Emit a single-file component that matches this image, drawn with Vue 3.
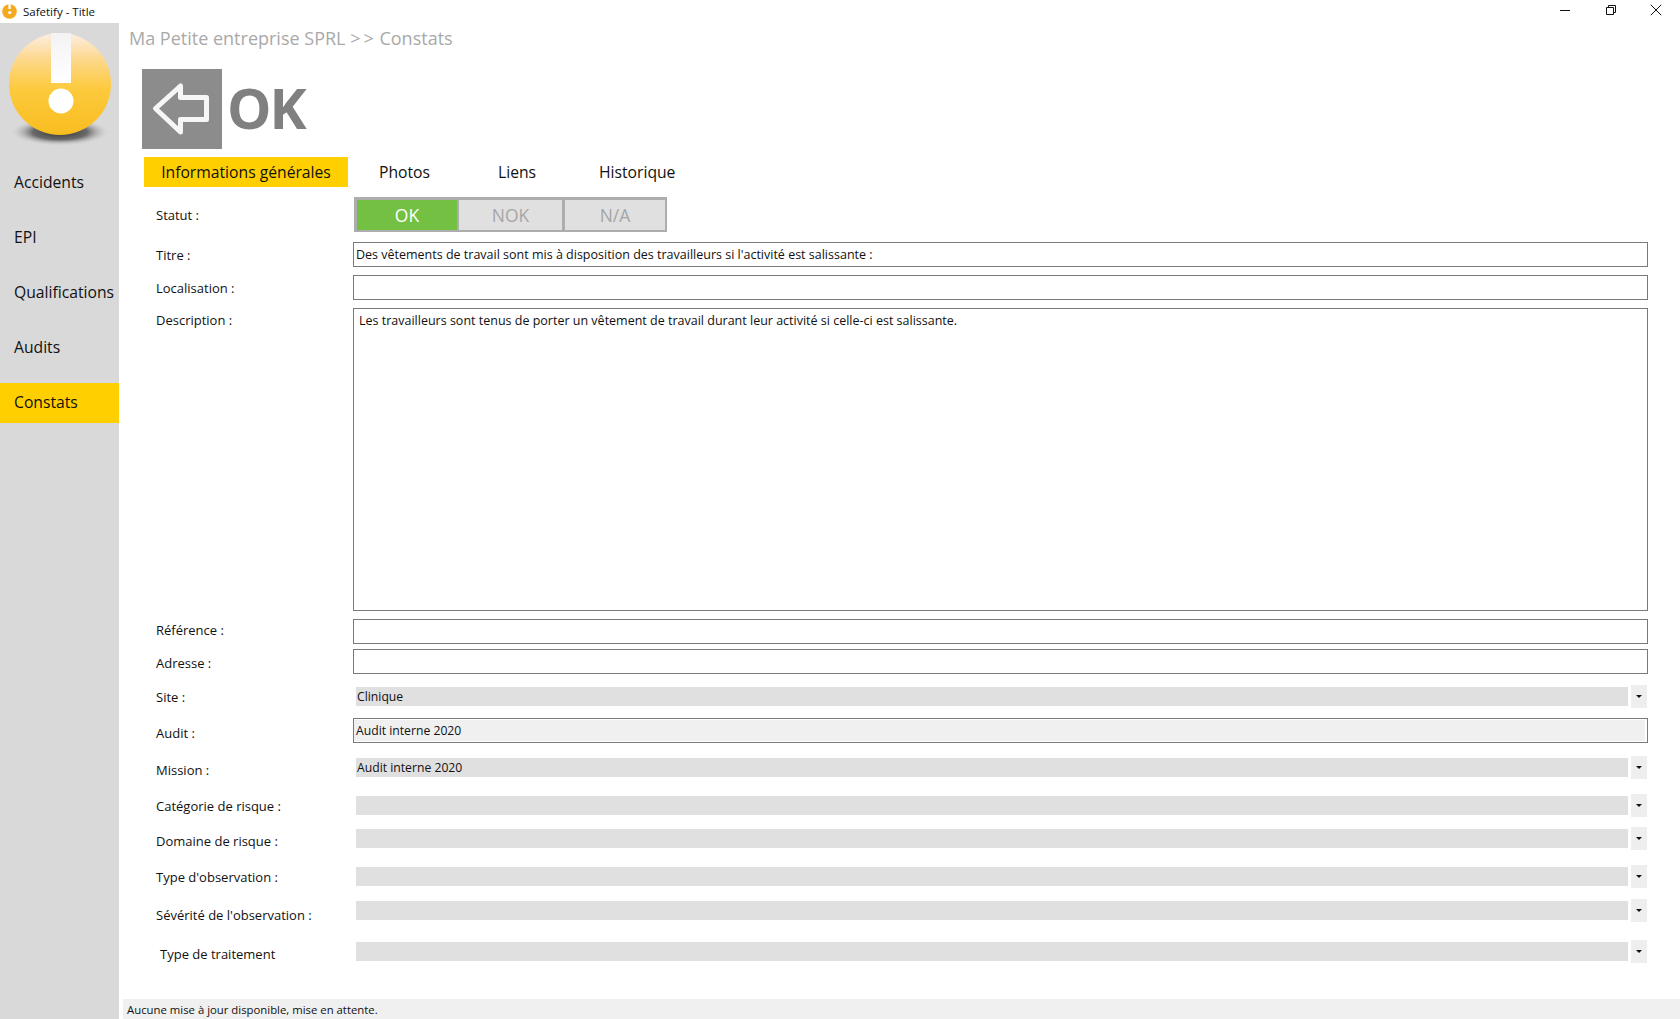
<script setup>
const nav = ['Accidents', 'EPI', 'Qualifications', 'Audits', 'Constats']
const tabs = [
  { label: 'Informations générales', cls: 'tab-info' },
  { label: 'Photos', cls: 'tab-photos' },
  { label: 'Liens', cls: 'tab-liens' },
  { label: 'Historique', cls: 'tab-hist' }
]
const rows = [
  { label: 'Titre :', kind: 'input', value: "Des vêtements de travail sont mis à disposition des travailleurs si l'activité est salissante :", gap: 10, lab: 4 },
  { label: 'Localisation :', kind: 'input', value: '', gap: 8, lab: 4 },
  { label: 'Description :', kind: 'area', value: 'Les travailleurs sont tenus de porter un vêtement de travail durant leur activité si celle-ci est salissante.', gap: 8, lab: 3 },
  { label: 'Référence :', kind: 'input', value: '', gap: 8, lab: 2 },
  { label: 'Adresse :', kind: 'input', value: '', gap: 5, lab: 5 },
  { label: 'Site :', kind: 'combo', value: 'Clinique', gap: 11, lab: 3 },
  { label: 'Audit :', kind: 'readonly', value: 'Audit interne 2020', gap: 10, lab: 6 },
  { label: 'Mission :', kind: 'combo', value: 'Audit interne 2020', gap: 13, lab: 5 },
  { label: 'Catégorie de risque :', kind: 'combo', value: '', gap: 15, lab: 3 },
  { label: 'Domaine de risque :', kind: 'combo', value: '', gap: 10, lab: 5 },
  { label: "Type d'observation :", kind: 'combo', value: '', gap: 15, lab: 3 },
  { label: "Sévérité de l'observation :", kind: 'combo', value: '', gap: 11, lab: 7 },
  { label: 'Type de traitement', kind: 'combo', value: '', gap: 18, lab: 5, indent: true }
]
</script>

<template>
  <div class="window">
    <header class="titlebar">
      <div class="title-left">
        <svg class="app-icon" width="18" height="18" viewBox="0 0 18 18">
          <circle cx="8.5" cy="8.5" r="7.3" fill="#f3aa1f" />
          <rect x="7.3" y="0" width="2.6" height="6" fill="#fff" fill-opacity="0.85" />
          <circle cx="8.8" cy="9.5" r="1.6" fill="#fff" />
        </svg>
        <span>Safetify - Title</span>
      </div>
      <div class="controls">
        <svg width="12" height="12" viewBox="0 0 12 12"><path d="M1 6.5h10" stroke="#111" fill="none" /></svg>
        <svg width="12" height="12" viewBox="0 0 12 12"><path d="M1.5 3.5h7v7h-7zM3.5 3.5v-2h7v7h-2" stroke="#111" fill="none" /></svg>
        <svg width="12" height="12" viewBox="0 0 12 12"><path d="M.8.8l10.4 10.4M11.2.8L.8 11.2" stroke="#111" fill="none" /></svg>
      </div>
    </header>

    <div class="body">
      <aside class="sidebar">
        <svg class="logo" width="119" height="125" viewBox="0 0 119 125">
          <defs>
            <linearGradient id="ball" x1="0" y1="0" x2="0" y2="1">
              <stop offset="0" stop-color="#fdeee4" />
              <stop offset="0.25" stop-color="#fdd88e" />
              <stop offset="0.55" stop-color="#fdca3c" />
              <stop offset="1" stop-color="#f8bd20" />
            </linearGradient>
            <radialGradient id="shadow">
              <stop offset="0" stop-color="#333" />
              <stop offset="0.55" stop-color="#6a6a6a" />
              <stop offset="1" stop-color="#d9d9d9" stop-opacity="0" />
            </radialGradient>
            <linearGradient id="bar" x1="0" y1="0" x2="0" y2="1">
              <stop offset="0" stop-color="#f3f3f3" />
              <stop offset="1" stop-color="#fff" />
            </linearGradient>
          </defs>
          <ellipse cx="60" cy="109" rx="50" ry="14" fill="url(#shadow)" />
          <circle cx="60" cy="61" r="51" fill="url(#ball)" />
          <rect x="51" y="10" width="20" height="50" fill="url(#bar)" />
          <circle cx="61" cy="78" r="12.5" fill="#fff" />
        </svg>
        <nav class="nav">
          <div v-for="item in nav" :key="item" class="nav-item" :class="{ active: item === 'Constats' }">{{ item }}</div>
        </nav>
      </aside>

      <main class="main">
        <h1 class="crumb">Ma Petite entreprise SPRL <span class="sep">&gt;&gt;</span> Constats</h1>

        <div class="status-head">
          <div class="back">
            <svg width="80" height="80" viewBox="0 0 80 80">
              <path d="M13.5 39.5 L38.5 17 L38.5 28.5 L64.5 28.5 L64.5 50.5 L38.5 50.5 L38.5 63 Z" fill="none" stroke="#f6f6f6" stroke-width="5" stroke-linejoin="round" />
            </svg>
          </div>
          <span class="big-ok">OK</span>
        </div>

        <div class="tabs">
          <div v-for="(t, i) in tabs" :key="t.label" class="tab" :class="[t.cls, { active: i === 0 }]">{{ t.label }}</div>
        </div>

        <div class="form">
          <div class="row row-status">
            <label class="label">Statut :</label>
            <div class="segments">
              <div class="seg seg-on">OK</div>
              <div class="seg seg-mid">NOK</div>
              <div class="seg seg-last">N/A</div>
            </div>
          </div>

          <div v-for="r in rows" :key="r.label" class="row" :class="'row-' + r.kind" :style="{ marginTop: r.gap + 'px' }">
            <label class="label" :class="{ indent: r.indent }" :style="{ marginTop: r.lab + 'px' }">{{ r.label }}</label>
            <div v-if="r.kind === 'combo'" class="combo">
              <div class="combo-value">{{ r.value }}</div>
              <div class="combo-btn"><span class="caret"></span></div>
            </div>
            <div v-else class="field" :class="'field-' + r.kind">{{ r.value }}</div>
          </div>
        </div>

        <footer class="statusbar">Aucune mise à jour disponible, mise en attente.</footer>
      </main>
    </div>
  </div>
</template>

<style>
html, body { margin: 0; padding: 0; background: #fff; }
</style>

<style scoped>
.window {
  width: 1680px;
  height: 1019px;
  display: flex;
  flex-direction: column;
  overflow: hidden;
  background: #fff;
  color: #111;
  font-family: "Open Sans", "Noto Sans", sans-serif;
}
.titlebar {
  height: 23px;
  flex: none;
  display: flex;
  justify-content: space-between;
}
.title-left {
  display: flex;
  align-items: center;
  gap: 4px;
  padding-left: 1px;
  font-size: 11.5px;
}
.controls {
  display: flex;
  gap: 33.5px;
  padding: 4px 18px 0 0;
}
.body { flex: 1; display: flex; min-height: 0; }
.sidebar {
  width: 119px;
  flex: none;
  background: #d9d9d9;
}
.logo { display: block; }
.nav { margin-top: 15px; }
.nav-item {
  height: 40px;
  margin-bottom: 15px;
  line-height: 38px;
  padding-left: 14px;
  font-size: 15.7px;
  white-space: nowrap;
}
.nav-item.active { background: #ffcf00; }
.main {
  flex: 1;
  min-width: 0;
  display: flex;
  flex-direction: column;
}
.crumb {
  margin: 0;
  padding: 3px 0 0 10px;
  height: 46px;
  box-sizing: border-box;
  font-size: 18px;
  font-weight: 400;
  line-height: 24px;
  color: #a9a9a9;
}
.sep { letter-spacing: 3px; margin-right: -2px; }
.status-head {
  display: flex;
  align-items: center;
  margin-left: 23px;
  height: 80px;
}
.back { width: 80px; height: 80px; background: #8c8c8c; }
.back svg { display: block; }
.big-ok {
  margin: -4px 0 0 5px;
  font-size: 56px;
  font-weight: 700;
  color: #808080;
  line-height: 80px;
  letter-spacing: -2px;
}
.tabs {
  display: flex;
  margin: 8px 0 0 25px;
  height: 30px;
}
.tab {
  font-size: 15.7px;
  line-height: 30px;
  white-space: nowrap;
}
.tab-info { width: 204px; text-align: center; }
.tab.active { background: #ffcf00; }
.tab-photos { margin-left: 31px; width: 119px; }
.tab-liens { width: 101px; }
.form {
  margin: 10px 0 0 37px;
  flex: 1;
}
.row { display: flex; height: 25px; }
.row-status { height: 35px; }
.row-area { height: 303px; }
.row-combo { height: 23px; }
.label {
  width: 197px;
  flex: none;
  font-size: 13px;
  line-height: 18px;
  white-space: nowrap;
}
.row-status .label { margin-top: 9px; }
.label.indent { padding-left: 4px; box-sizing: border-box; }
.segments {
  display: flex;
  width: 313px;
  height: 35px;
  margin-left: 1px;
  box-sizing: border-box;
  border: 2px solid #adadad;
  border-top-width: 3px;
  border-left-width: 3px;
  background: #adadad;
}
.seg {
  width: 100px;
  flex: none;
  background: #e0e0e0;
  color: #a6a6a6;
  font-size: 17.5px;
  line-height: 30px;
  text-align: center;
}
.seg-on { background: #74c043; color: #fff; }
.seg-mid { width: 103px; margin-left: 2px; }
.seg-last { margin-left: 3px; }
.field {
  width: 1295px;
  box-sizing: border-box;
  border: 1px solid #7a7a7a;
  font-size: 12.5px;
  line-height: 23px;
  padding: 0 2px;
  white-space: nowrap;
  overflow: hidden;
}
.field-area { padding: 3px 5px; line-height: 17px; }
.field-readonly { background: #f0f0f0; font-size: 12.2px; box-shadow: inset -1px 0 0 1px #fff; }
.combo {
  width: 1294px;
  display: flex;
  align-items: center;
  padding-left: 3px;
  box-sizing: border-box;
}
.combo-value {
  width: 1272px;
  height: 19px;
  flex: none;
  background: #e0e0e0;
  font-size: 12.2px;
  line-height: 20px;
  padding-left: 1px;
  box-sizing: border-box;
}
.combo-btn {
  width: 16px;
  height: 23px;
  margin-left: 3px;
  background: #eee;
  display: flex;
  align-items: center;
  justify-content: center;
}
.caret {
  width: 0;
  height: 0;
  border-left: 3px solid transparent;
  border-right: 3px solid transparent;
  border-top: 3px solid #111;
}
.statusbar {
  margin-left: 4px;
  height: 20px;
  flex: none;
  background: #f0f0f0;
  font-size: 11.35px;
  line-height: 21px;
  padding-left: 4px;
}
</style>
